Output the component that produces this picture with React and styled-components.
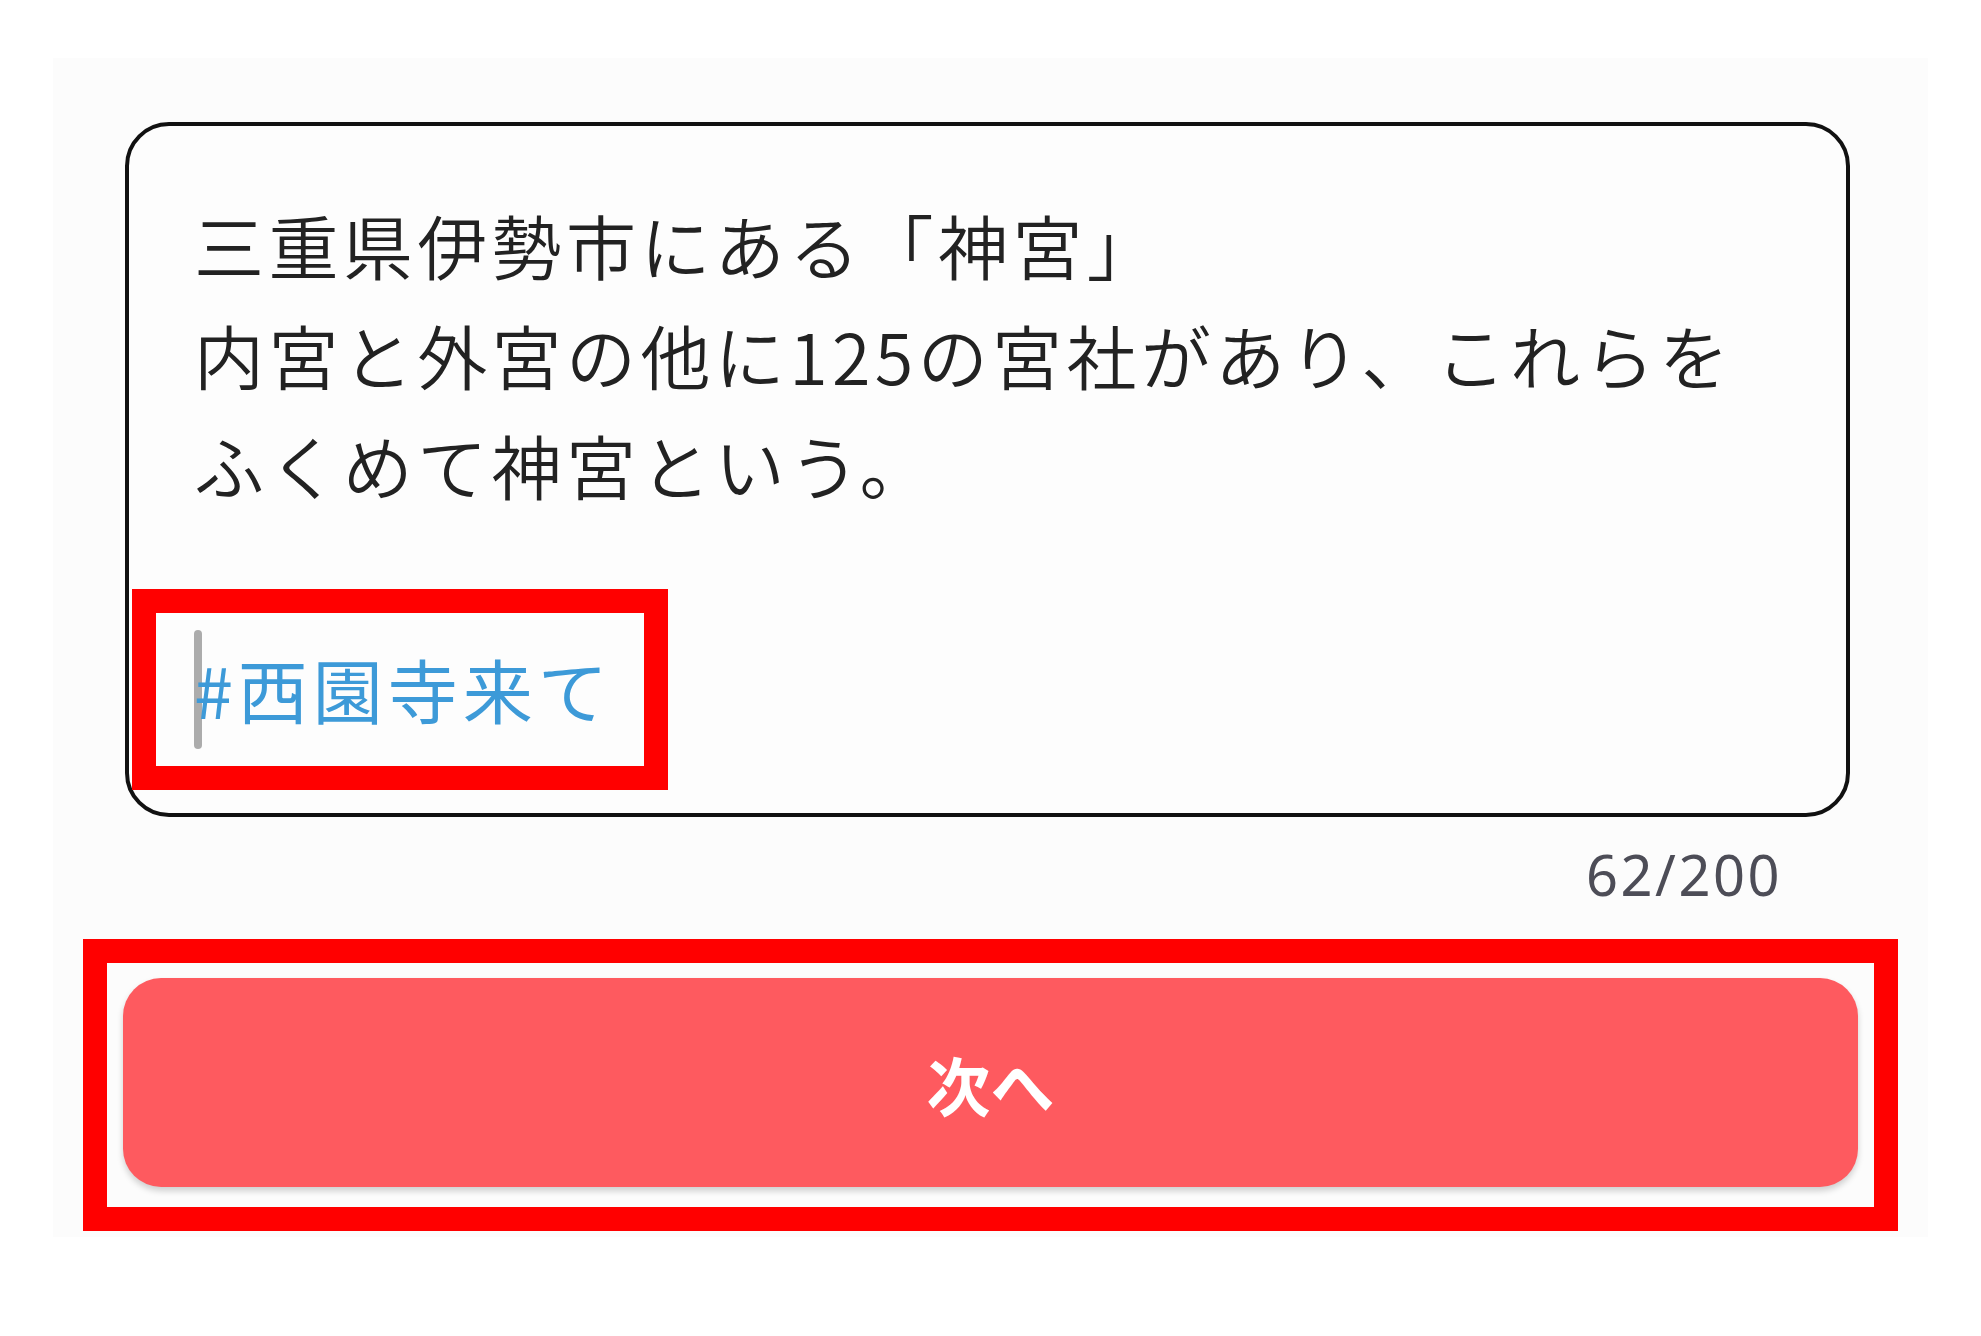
import React from "react";
import styled, { createGlobalStyle } from "styled-components";

const GlobalStyle = createGlobalStyle`
  html, body {
    margin: 0;
    padding: 0;
    background: #ffffff;
  }
  body {
    font-family: "Noto Sans CJK JP", "Noto Sans", sans-serif;
  }
`;

const bodyLines = [
  "三重県伊勢市にある「神宮」",
  "内宮と外宮の他に125の宮社があり、これらを",
  "ふくめて神宮という。",
];

export default function App() {
  return (
    <>
      <GlobalStyle />
      <Screen>
        <Column>
          <Composer>
            {bodyLines.map((line) => (
              <Line key={line}>{line}</Line>
            ))}
            <Line>&nbsp;</Line>
            <Line>
              <Caret />
              <Hashtag>#西園寺来て</Hashtag>
            </Line>
            <Highlight $top={463} $left={3} $width={536} $height={201} />
          </Composer>

          <Counter>62/200</Counter>

          <ButtonWrap>
            <NextButton>次へ</NextButton>
            <Highlight $top={-39} $left={-40} $right={-40} $bottom={-44} />
          </ButtonWrap>
        </Column>
      </Screen>
    </>
  );
}

const Screen = styled.main`
  margin: 58px 53px 0;
  background: #fcfcfc;
  padding: 64px 70px 50px;
`;

const Column = styled.div`
  display: flex;
  flex-direction: column;
`;

const Composer = styled.div`
  position: relative;
  margin: 0 8px 0 2px;
  border: 4px solid #111;
  border-radius: 44px;
  background: #fdfdfd;
  padding: 64px 60px 73px 65px;
  font-family: "Noto Sans CJK JP", sans-serif;
  font-size: 70px;
  font-weight: 350;
  line-height: 110px;
  letter-spacing: 4.4px;
  color: #222;
`;

const Line = styled.div`
  white-space: nowrap;
  height: 110px;
`;

const Hashtag = styled.span`
  color: #3d9ad8;
  font-weight: 400;
  letter-spacing: 5px;
`;

const Caret = styled.span`
  display: inline-block;
  width: 8px;
  height: 119px;
  margin-right: -8px;
  vertical-align: -30px;
  border-radius: 4px;
  background: #acacac;
`;

const Highlight = styled.div`
  position: absolute;
  top: ${(p) => p.$top}px;
  left: ${(p) => p.$left}px;
  ${(p) => (p.$width ? `width: ${p.$width}px;` : `right: ${p.$right}px;`)}
  ${(p) => (p.$height ? `height: ${p.$height}px;` : `bottom: ${p.$bottom}px;`)}
  box-sizing: border-box;
  border: 24px solid #ff0000;
  pointer-events: none;
`;

const Counter = styled.div`
  align-self: flex-end;
  margin: 24px 76px 0 0;
  font-family: "Noto Sans", sans-serif;
  font-size: 56px;
  line-height: 67px;
  letter-spacing: 2.5px;
  color: #4d4d57;
`;

const ButtonWrap = styled.div`
  position: relative;
  margin-top: 70px;
`;

const NextButton = styled.button`
  display: flex;
  align-items: center;
  justify-content: center;
  width: 100%;
  height: 209px;
  border: none;
  border-radius: 38px;
  background: #fe5a5f;
  box-shadow: 0 4px 6px rgba(0, 0, 0, 0.18);
  color: #fff;
  font-family: "Noto Sans CJK JP", sans-serif;
  font-size: 64px;
  font-weight: 700;
  cursor: pointer;
`;
